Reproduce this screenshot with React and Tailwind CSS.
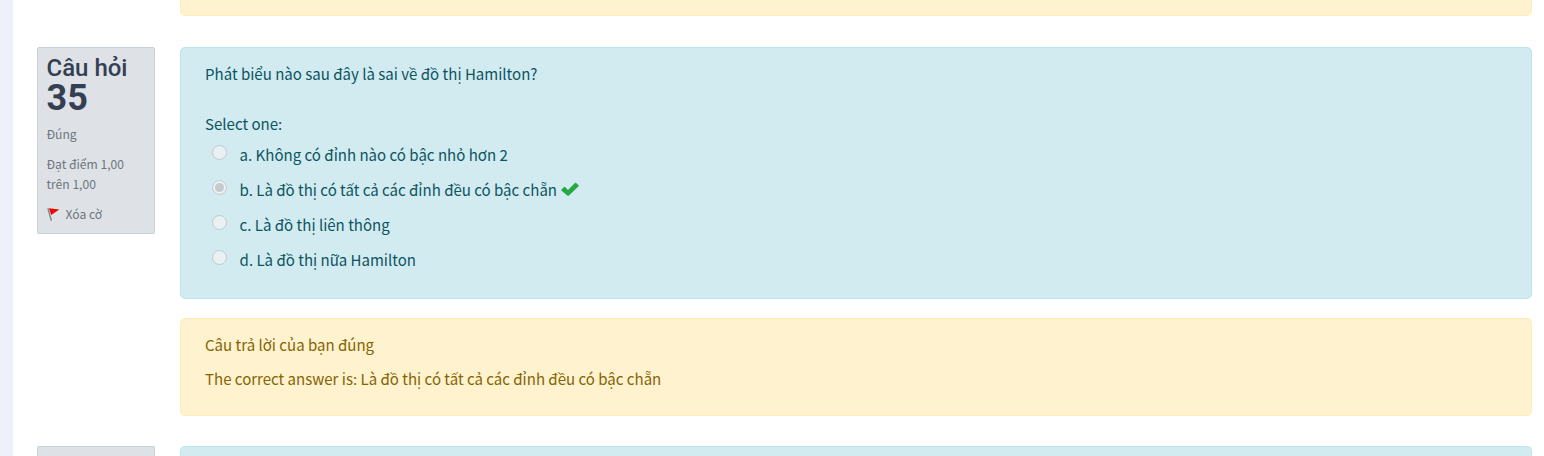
const options = [
  { id: 'a', text: 'a. Không có đỉnh nào có bậc nhỏ hơn 2' },
  { id: 'b', text: 'b. Là đồ thị có tất cả các đỉnh đều có bậc chẵn', checked: true },
  { id: 'c', text: 'c. Là đồ thị liên thông' },
  { id: 'd', text: 'd. Là đồ thị nữa Hamilton' },
];

function Radio({ checked }) {
  return (
    <span className="flex h-[15px] w-[15px] shrink-0 items-center justify-center rounded-full border border-[#c3c9cb] bg-[#e9f1f4]">
      {checked && <span className="h-[9px] w-[9px] rounded-full bg-[#c5cacd]" />}
    </span>
  );
}

function Check() {
  return (
    <svg className="ml-[4px] mt-[5px] h-[14px] w-[18px]" viewBox="0 0 17 13" fill="#28a745">
      <path d="M0.3 7.1 2.8 4.6Q3.3 4.2 3.8 4.6L6.6 7.4 13.2.8Q13.7.4 14.2.8L16.6 3Q17 3.5 16.6 4L7.5 12.7Q6.7 13.2 5.9 12.7L.3 8Q0 7.5.3 7.1Z" />
    </svg>
  );
}

function Flag() {
  return (
    <svg className="h-[14px] w-[13px]" viewBox="0 0 13 14">
      <path d="M0.9 1.2 4.4 13.7" stroke="#7f7f7f" strokeWidth="1.3" fill="none" />
      <path d="M2 1.2 12.3 2.6 4.2 7.9Z" fill="#f00000" />
    </svg>
  );
}

function Info() {
  return (
    <aside className="h-[187px] w-[118px] shrink-0 rounded-[2px] border border-[#cad0d7] bg-[#dee2e6] px-[8.5px] pt-[7px] text-[12.1px] leading-5 text-[#6c757d]">
      <h3 className="whitespace-nowrap font-['Roboto',sans-serif] text-[24px] font-medium leading-[26px] text-[#343f52]">Câu hỏi</h3>
      <div className="font-['Roboto',sans-serif] text-[36px] font-bold leading-[34px] text-[#343f52]">35</div>
      <div className="mt-[9px]">Đúng</div>
      <div className="mt-[10px]">Đạt điểm 1,00<br />trên 1,00</div>
      <div className="mt-[10px] flex items-center gap-[6px]"><Flag />Xóa cờ</div>
    </aside>
  );
}

export default function App() {
  return (
    <div className="flex h-[456px] w-full overflow-hidden bg-white font-['Noto_Sans_CJK_SC',sans-serif] text-[15.04px] leading-[25px]">
      <div className="w-[13px] shrink-0 bg-[#eef1fa]" />
      <main className="min-w-0 flex-1 pl-6 pr-3">
        <div className="ml-[143px] h-4 rounded-b-[5px] border border-t-0 border-[#ffeeba] bg-[#fff2ce]" />
        <section className="mt-[31px] flex gap-[25px]">
          <Info />
          <div className="min-w-0 flex-1">
            <div className="h-[252px] rounded-[5px] border border-[#bee5eb] bg-[#d1ebf0] px-6 pt-[13px] text-[#0c5460]">
              <p>Phát biểu nào sau đây là sai về đồ thị Hamilton?</p>
              <p className="mt-[25px]">Select one:</p>
              <div className="mt-[6px] flex flex-col gap-[10px] pl-[7px]">
                {options.map((o) => (
                  <div key={o.id} className="flex h-[25px] items-start">
                    <div className="mr-[12.6px] mt-[3px]"><Radio checked={o.checked} /></div>
                    <span>{o.text}</span>
                    {o.checked && <Check />}
                  </div>
                ))}
              </div>
            </div>
            <div className="mt-[19px] h-[98px] rounded-[5px] border border-[#ffeeba] bg-[#fff2ce] px-6 pt-[13px] text-[#856404]">
              <p>Câu trả lời của bạn đúng</p>
              <p className="mt-[9px]">The correct answer is: Là đồ thị có tất cả các đỉnh đều có bậc chẵn</p>
            </div>
          </div>
        </section>
        <section className="mt-[30px] flex gap-[25px]">
          <div className="h-[10px] w-[118px] shrink-0 rounded-t-[2px] border border-b-0 border-[#cad0d7] bg-[#dee2e6]" />
          <div className="h-[10px] flex-1 rounded-t-[5px] border border-b-0 border-[#bee5eb] bg-[#d1ebf0]" />
        </section>
      </main>
    </div>
  );
}
